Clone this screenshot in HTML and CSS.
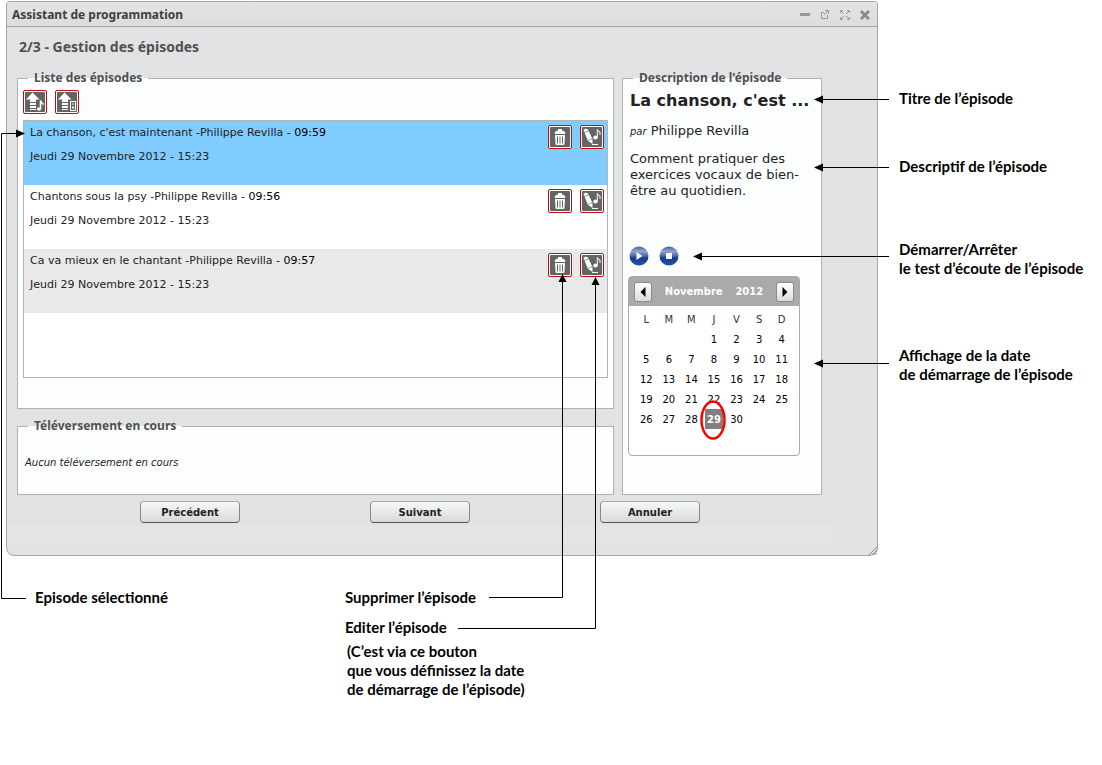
FILE: index.html
```html
<!DOCTYPE html>
<html lang="fr">
<head>
<meta charset="utf-8">
<title>Assistant de programmation</title>
<link rel="stylesheet" href="styles.css">
</head>
<body>
<svg class="defs" aria-hidden="true">
  <defs>
    <linearGradient id="ball" x1="0" y1="0" x2="0" y2="1">
      <stop offset="0" stop-color="#3f5da0"/><stop offset=".25" stop-color="#93a5cf"/><stop offset=".5" stop-color="#4c68aa"/><stop offset=".6" stop-color="#143c88"/><stop offset="1" stop-color="#2254ad"/>
    </linearGradient>
    <symbol id="tile" viewBox="0 0 24 24">
      <rect x=".5" y=".5" width="23" height="23" rx="1.5" fill="#fff" stroke="#c00d12"/>
      <rect x="2" y="2" width="20" height="20" rx="1" fill="#646464"/>
    </symbol>
    <symbol id="upload" viewBox="0 0 24 24">
      <path d="M9.500 2.500 3 9.500h4V12h6V9.500h3.500z" fill="#fff"/>
      <path d="M7 13h6v2H7zM7 16h6v2H7zM7 19h6v1H7z" fill="#fff"/>
    </symbol>
    <symbol id="trash" viewBox="0 0 24 24">
      <path d="M10.500 6V4.500h3V6M7 8.500V7.500L9 6h6l2 1.500v1z" fill="#fff" stroke="#fff"/>
      <path d="M7 10h10l-.5 9q0 1-1 1h-7q-1 0-1-1z" fill="#fff"/>
      <path d="M9.500 11.500v7M12 11.500v7M14.500 11.500v7" stroke="#646464"/>
    </symbol>
    <symbol id="edit" viewBox="0 0 24 24">
      <path d="M3.500 5 5.500 3.500 8 4.500l4.500 9.500v5L8 16z" fill="#fff"/>
      <path d="M4.500 7.500 8.500 6M8 15.500l4-2" stroke="#646464" stroke-width=".7"/>
      <path d="M12 19.500h6" stroke="#fff"/>
      <ellipse cx="15.500" cy="12.500" rx="2.200" ry="2" fill="#fff"/>
      <path d="M17.300 13V4.500q.5 2 2.700 2.500v3" fill="none" stroke="#fff"/>
    </symbol>
  </defs>
</svg>
<main class="page">
  <section class="window">
    <header class="titlebar">
      <h1>Assistant de programmation</h1>
      <div class="tools">
        <button type="button" aria-label="Réduire"><svg viewBox="0 0 12 12"><path d="M1 6.500h10" stroke="#999" stroke-width="3"/></svg></button>
        <button type="button" aria-label="Détacher"><svg viewBox="0 0 12 12"><path d="M5 4.500H2.500v6h6V7M6 2.500h3.500V6M9.500 2.500 5 7" fill="none" stroke="#999"/></svg></button>
        <button type="button" aria-label="Agrandir"><svg viewBox="0 0 12 12"><path d="M1.500 5V2.500H4M8 2.500h2.500V5M10.500 9v2.500H8M4 11.500H1.500V9M2 3l3 3M10 3 7 6M10 11 7 8M2 11l3-3" fill="none" stroke="#999"/></svg></button>
        <button type="button" aria-label="Fermer"><svg viewBox="0 0 12 12"><path d="m2 3 8 8M10 3l-8 8" stroke="#8c8c8c" stroke-width="3"/></svg></button>
      </div>
    </header>
    <h2>2/3 - Gestion des épisodes</h2>
    <div class="panels">
      <div class="left">
        <fieldset class="episodes">
          <legend>Liste des épisodes</legend>
          <div class="toolbar">
            <button type="button" class="icon" aria-label="Téléverser un audio"><svg viewBox="0 0 24 24"><use href="#tile"/><use href="#upload"/><path d="M17.500 19V10.500q.5 2.500 3 4" fill="none" stroke="#fff" stroke-width="1.500"/><ellipse cx="16" cy="19" rx="2.200" ry="1.800" fill="#fff"/></svg></button>
            <button type="button" class="icon" aria-label="Téléverser depuis un lecteur"><svg viewBox="0 0 24 24"><use href="#tile"/><use href="#upload"/><path d="M15.500 11.500h5v9h-5z" fill="#646464" stroke="#fff"/><path d="M17 13.500h2v1h-2zM17 16.500h2v2h-2z" fill="#fff"/></svg></button>
          </div>
          <ul class="list">
            <li class="row selected">
              <div class="info"><p>La chanson, c'est maintenant -Philippe Revilla - <span>09:59</span></p><p>Jeudi 29 Novembre 2012 - 15:23</p></div>
              <button type="button" class="icon" aria-label="Supprimer"><svg viewBox="0 0 24 24"><use href="#tile"/><use href="#trash"/></svg></button>
              <button type="button" class="icon" aria-label="Editer"><svg viewBox="0 0 24 24"><use href="#tile"/><use href="#edit"/></svg></button>
            </li>
            <li class="row">
              <div class="info"><p>Chantons sous la psy -Philippe Revilla - <span>09:56</span></p><p>Jeudi 29 Novembre 2012 - 15:23</p></div>
              <button type="button" class="icon" aria-label="Supprimer"><svg viewBox="0 0 24 24"><use href="#tile"/><use href="#trash"/></svg></button>
              <button type="button" class="icon" aria-label="Editer"><svg viewBox="0 0 24 24"><use href="#tile"/><use href="#edit"/></svg></button>
            </li>
            <li class="row alt">
              <div class="info"><p>Ca va mieux en le chantant -Philippe Revilla - <span>09:57</span></p><p>Jeudi 29 Novembre 2012 - 15:23</p></div>
              <button type="button" class="icon" aria-label="Supprimer"><svg viewBox="0 0 24 24"><use href="#tile"/><use href="#trash"/></svg></button>
              <button type="button" class="icon" aria-label="Editer"><svg viewBox="0 0 24 24"><use href="#tile"/><use href="#edit"/></svg></button>
            </li>
          </ul>
        </fieldset>
        <fieldset class="uploads">
          <legend>Téléversement en cours</legend>
          <p>Aucun téléversement en cours</p>
        </fieldset>
      </div>
      <fieldset class="details">
        <legend>Description de l'épisode</legend>
        <h3>La chanson, c'est ...</h3>
        <p class="author"><em>par</em> Philippe Revilla</p>
        <p class="summary">Comment pratiquer des exercices vocaux de bien-être au quotidien.</p>
        <div class="player">
          <button type="button" aria-label="Démarrer"><svg viewBox="0 0 20 20"><circle cx="10" cy="10" r="9.500" fill="url(#ball)"/><path d="M7.500 6v8l6-4z" fill="#fff"/></svg></button>
          <button type="button" aria-label="Arrêter"><svg viewBox="0 0 20 20"><circle cx="10" cy="10" r="9.500" fill="url(#ball)"/><path d="M7 7h6v6H7z" fill="#fff"/></svg></button>
        </div>
        <div class="calendar">
          <div class="month">
            <button type="button" aria-label="Mois précédent"><svg viewBox="0 0 6 10"><path d="M5.500 0v10L.5 5z"/></svg></button>
            <span>Novembre</span><span>2012</span>
            <button type="button" aria-label="Mois suivant"><svg viewBox="0 0 6 10"><path d="M.5 0v10l5-5z"/></svg></button>
          </div>
          <table>
            <thead><tr><th>L</th><th>M</th><th>M</th><th>J</th><th>V</th><th>S</th><th>D</th></tr></thead>
            <tbody>
              <tr><td></td><td></td><td></td><td>1</td><td>2</td><td>3</td><td>4</td></tr>
              <tr><td>5</td><td>6</td><td>7</td><td>8</td><td>9</td><td>10</td><td>11</td></tr>
              <tr><td>12</td><td>13</td><td>14</td><td>15</td><td>16</td><td>17</td><td>18</td></tr>
              <tr><td>19</td><td>20</td><td>21</td><td>22</td><td>23</td><td>24</td><td>25</td></tr>
              <tr><td>26</td><td>27</td><td>28</td><td class="today">29<svg class="ring" viewBox="0 0 26 40"><ellipse cx="13" cy="20" rx="11.500" ry="18.500" fill="none" stroke="#f00" stroke-width="2.500"/></svg></td><td>30</td><td></td><td></td></tr>
            </tbody>
          </table>
        </div>
      </fieldset>
    </div>
    <div class="actions">
      <button type="button">Précédent</button>
      <button type="button">Suivant</button>
      <button type="button">Annuler</button>
    </div>
    <div class="strip"></div>
    <svg class="grip" viewBox="0 0 8 8"><path d="M0 8 8 0M3 8l5-5M6 8l2-2" stroke="#888"/></svg>
  </section>
  <aside class="notes">
    <p>Titre de l’épisode</p>
    <p>Descriptif de l’épisode</p>
    <p>Démarrer/Arrêter<br>le test d’écoute de l’épisode</p>
    <p>Affichage de la date<br>de démarrage de l’épisode</p>
  </aside>
  <footer class="captions">
    <p>Episode sélectionné</p>
    <div>
      <p>Supprimer l’épisode</p>
      <p>Editer l’épisode</p>
      <p class="more">(C’est via ce bouton<br>que vous définissez la date<br>de démarrage de l’épisode)</p>
    </div>
  </footer>
  <svg class="arrows" width="1102" height="765" viewBox="0 0 1102 765" aria-hidden="true">
    <g fill="none" stroke="#000">
      <path d="M26 598.500H1.500v-465H18M822 99.500h67M822 167.500h67M701 256.500h188M822 363.500h67M489 597.500h73.500V281"/>
      <path d="M458 628.500h137.500V284"/>
    </g>
    <path d="m25 133.500-9-4v8zM814 99.500l9-4v8zM814 167.500l9-4v8zM693 256.500l9-4v8zM814 363.500l9-4v8zM562.500 274l-4 8h8zM595.500 277l-4 8h8z"/>
  </svg>
</main>
</body>
</html>
```

FILE: styles.css
```css
* { box-sizing: border-box; }
body {
  margin: 0;
  background: #fff;
  color: #222;
  font-family: "DejaVu Sans", sans-serif;
  font-size: 10px;
}
h1, h2, h3, p, ul { margin: 0; padding: 0; }
button { margin: 0; padding: 0; border: 0; background: none; font-family: inherit; color: inherit; }
svg { display: block; }
.defs { position: absolute; width: 0; height: 0; }

.page {
  position: relative;
  display: grid;
  grid-template-columns: minmax(0, 1fr) 224px;
  padding: 1px 0 0 6px;
}

/* Window frame */
.window {
  position: relative;
  border: 1px solid #a5a8aa;
  border-radius: 3px 3px 8px 8px;
  background: #e1e2e4;
  padding-bottom: 11px;
}
.titlebar {
  display: flex;
  align-items: center;
  justify-content: space-between;
  height: 25px;
  padding: 0 6px 0 5px;
  border-bottom: 1px solid #a5a5a5;
  background: linear-gradient(#e4e4e4, #dcdcdc);
}
h1, h2, legend { font-family: "Noto Sans", sans-serif; font-weight: 700; color: #505050; }
h1 { font-size: 12px; color: #404040; }
.tools { display: flex; gap: 8px; }
.tools button, .tools svg { width: 12px; height: 12px; }
h2 { padding: 0 12px 2px; font-size: 14px; line-height: 39px; }

/* Panels */
.panels { display: flex; gap: 8px; padding: 0 55px 0 10px; }
.left { flex: 1; min-width: 0; display: flex; flex-direction: column; gap: 7px; }
fieldset {
  min-width: 0;
  margin: 0;
  padding: 0 5px;
  border: 1px solid #b0b2b2;
  background: #fcfefe;
}
legend { margin-left: 5px; padding: 0 6px; font-size: 12px; line-height: 20px; }
.episodes { padding-bottom: 30px; }
.toolbar { display: flex; gap: 8px; padding: 2px 0 6px; }
.icon, .icon svg { width: 24px; height: 24px; }
.list { min-height: 258px; border: 1px solid #b4b4b4; background: #fff; list-style: none; }
.row { display: flex; gap: 8px; height: 64px; padding: 4px 3px 0 6px; }
.row.selected { background: #80ccff; }
.row.alt { background: #e9e9e9; }
.info { flex: 1; font-size: 11px; line-height: 16px; }
.info p + p { margin-top: 8px; }
.info span { color: #000; }
.uploads { height: 79px; }
.uploads p { padding: 19px 2px; font-style: italic; line-height: 16px; }

/* Episode description */
.details { width: 200px; }
.details h3 { padding-left: 2px; font-size: 16px; line-height: 26px; white-space: nowrap; }
.author { margin-top: 8px; padding-left: 2px; font-size: 13px; line-height: 18px; }
.author em { font-size: 10px; }
.summary { margin-top: 10px; padding-left: 2px; min-height: 95px; font-size: 13px; line-height: 16px; }
.player { display: flex; gap: 10px; padding-left: 1px; }
.player button, .player svg { width: 20px; height: 20px; }
.calendar {
  width: 172px;
  height: 180px;
  margin-top: 10px;
  border: 1px solid #aaa;
  border-radius: 4px;
  background: #fff;
}
.month {
  display: flex;
  align-items: center;
  justify-content: space-between;
  height: 29px;
  padding: 0 5px;
  background: #aaa;
  color: #fff;
  font-weight: 700;
}
.month button {
  display: grid;
  place-items: center;
  width: 18px;
  height: 20px;
  border: 1px solid #8a8a8a;
  border-radius: 3px;
  background: linear-gradient(#fff, #dcdcdc);
}
.month svg { width: 6px; height: 10px; }
table { width: 158px; margin: 3px 6px; border-collapse: collapse; table-layout: fixed; }
th, td { height: 20px; padding: 0; font-weight: 400; text-align: center; color: #000; }
th { color: #333; }
.today {
  position: relative;
  background: linear-gradient(#808080, #808080) center / 18px 20px no-repeat;
  color: #fff;
  font-weight: 700;
}
.ring { position: absolute; top: -9px; left: -3px; width: 26px; height: 40px; }

/* Wizard buttons */
.actions { display: flex; gap: 130px; padding: 6px 0 3px 133px; }
.actions button {
  width: 100px;
  height: 22px;
  border: 1px solid #888;
  border-top-color: #aaa;
  border-bottom-color: #555;
  border-radius: 4px;
  background: linear-gradient(#f6f8f7, #d8d9d9);
  font-size: 10px;
  font-weight: 700;
}
.strip { height: 18px; margin-right: 45px; background: #e5e5e5; }
.grip { position: absolute; right: 0; bottom: 0; width: 8px; height: 8px; }

/* Notes */
.notes, .captions { color: #000; font: 700 15px/19px Lato, sans-serif; }
.notes { display: flex; flex-direction: column; padding: 88px 0 0 21px; white-space: nowrap; }
.notes p + p { margin-top: 49px; }
.notes p + p + p { margin-top: 64px; }
.notes p + p + p + p { margin-top: 68px; }
.captions { grid-column: 1 / -1; display: grid; grid-template-columns: 310px 1fr; padding: 32px 0 0 29px; }
.captions p + p { margin-top: 11px; }
.captions .more { margin-top: 5px; padding-left: 2px; }
.arrows { position: absolute; top: 0; left: 0; pointer-events: none; }
```
